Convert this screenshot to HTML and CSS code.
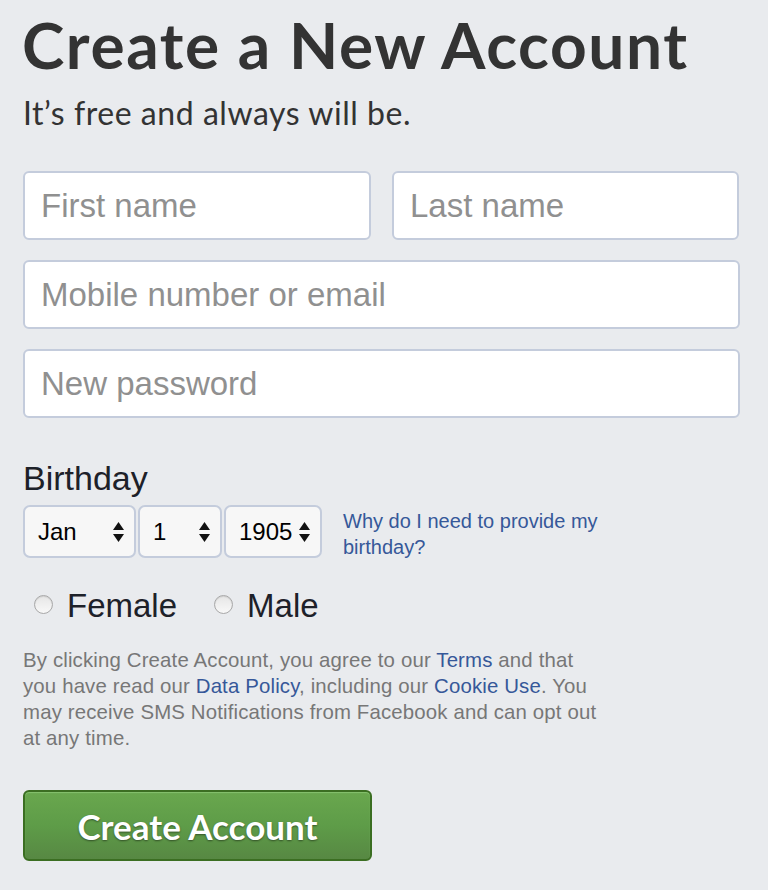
FILE: index.html
```html
<!DOCTYPE html>
<html lang="en">
<head>
<meta charset="utf-8">
<title>Create a New Account</title>
<link rel="stylesheet" href="styles.css">
</head>
<body>
<main class="signup">
  <h1 class="title">Create a New Account</h1>
  <p class="subtitle">It’s free and always will be.</p>

  <div class="name-row">
    <div class="field">First name</div>
    <div class="field">Last name</div>
  </div>
  <div class="field">Mobile number or email</div>
  <div class="field">New password</div>

  <h2 class="label">Birthday</h2>
  <div class="birthday-row">
    <div class="select sel-month"><span>Jan</span><svg class="arrows" width="13" height="22" viewBox="0 0 13 22"><path d="M6.5 1 L12 9 H1 Z M6.5 21 L12 13 H1 Z" fill="#111"/></svg></div>
    <div class="select sel-day"><span>1</span><svg class="arrows" width="13" height="22" viewBox="0 0 13 22"><path d="M6.5 1 L12 9 H1 Z M6.5 21 L12 13 H1 Z" fill="#111"/></svg></div>
    <div class="select sel-year"><span>1905</span><svg class="arrows" width="13" height="22" viewBox="0 0 13 22"><path d="M6.5 1 L12 9 H1 Z M6.5 21 L12 13 H1 Z" fill="#111"/></svg></div>
    <a class="why" href="#">Why do I need to provide my birthday?</a>
  </div>

  <div class="gender-row">
    <label class="radio"><span class="dot"></span>Female</label>
    <label class="radio"><span class="dot"></span>Male</label>
  </div>

  <p class="terms">By clicking Create Account, you agree to our <a href="#">Terms</a> and that you have read our <a href="#">Data Policy</a>, including our <a href="#">Cookie Use</a>. You may receive SMS Notifications from Facebook and can opt out at any time.</p>

  <button class="submit" type="button">Create Account</button>
</main>
</body>
</html>
```
FILE: styles.css
```css
html, body {
  margin: 0;
  padding: 0;
  background: #e9ebee;
}
body {
  font-family: "Liberation Sans", Arial, sans-serif;
  color: #1d2129;
}
.signup {
  width: 717px;
  padding: 0 0 0 23px;
  display: flex;
  flex-direction: column;
}
.title {
  font-family: Lato, "Open Sans", sans-serif;
  font-weight: 700;
  font-size: 64px;
  line-height: 76px;
  color: #333;
  margin: 7px 0 0 -1px;
  letter-spacing: 1.6px;
}
.subtitle {
  font-family: Lato, "Open Sans", sans-serif;
  font-size: 32px;
  line-height: 40px;
  color: #333;
  margin: 10px 0 0 0;
  letter-spacing: 0.55px;
}
.name-row {
  display: grid;
  grid-template-columns: 348px 347px;
  column-gap: 21px;
  margin-top: 38px;
  margin-bottom: 20px;
}
.field {
  box-sizing: border-box;
  height: 69px;
  background: #fff;
  border: 2px solid #c4ccdc;
  border-radius: 6px;
  padding: 0 16px;
  display: flex;
  align-items: center;
  font-family: "Liberation Sans", Arial, sans-serif;
  font-size: 33px;
  color: #909090;
  margin-bottom: 20px;
}
.name-row .field { margin-bottom: 0; }
.label {
  font-family: "Liberation Sans", Arial, sans-serif;
  font-weight: 400;
  font-size: 34px;
  line-height: 38px;
  color: #1d2129;
  margin: 21px 0 0 0;
}
.birthday-row {
  display: flex;
  align-items: flex-start;
  gap: 2px;
  margin-top: 8px;
}
.select {
  box-sizing: border-box;
  height: 53px;
  background: #f7f7f7;
  border: 2px solid #c4ccdc;
  border-radius: 7px;
  display: flex;
  align-items: center;
  justify-content: space-between;
  padding: 0 9px 0 13px;
  font-size: 24px;
  color: #000;
}
.sel-month { width: 113px; }
.sel-day { width: 84px; }
.sel-year { width: 98px; }
.arrows { flex: none; }
.why {
  width: 290px;
  margin: 3px 0 0 19px;
  font-size: 20px;
  line-height: 26px;
  color: #365899;
  text-decoration: none;
}
.gender-row {
  display: flex;
  gap: 37px;
  margin-top: 27px;
  padding-left: 11px;
}
.radio {
  display: flex;
  align-items: center;
  gap: 14px;
  font-size: 33px;
  line-height: 38px;
  color: #1d2129;
}
.dot {
  display: block;
  width: 17px;
  height: 17px;
  border-radius: 50%;
  border: 1px solid #a8a8a8;
  background: linear-gradient(#e6e6e6, #f8f8f8);
  box-shadow: inset 0 1px 1px rgba(0,0,0,0.1);
  margin-top: -4px;
}
.terms {
  width: 578px;
  margin: 22px 0 0 0;
  font-size: 20.4px;
  letter-spacing: 0.15px;
  line-height: 26px;
  color: #777;
}
.terms a {
  color: #365899;
  text-decoration: none;
}
.submit {
  box-sizing: border-box;
  width: 349px;
  height: 71px;
  margin-top: 39px;
  border: 2px solid #3b6e22;
  border-radius: 6px;
  background: linear-gradient(#69a74e, #5e9c48 50%, #578843);
  box-shadow: inset 0 1px 1px #87c36f;
  color: #fff;
  font-family: Lato, "Open Sans", sans-serif;
  font-weight: 700;
  font-size: 35px;
  text-shadow: 0 1px 2px rgba(0,0,0,0.45);
  cursor: pointer;
  padding: 0;
}
```
